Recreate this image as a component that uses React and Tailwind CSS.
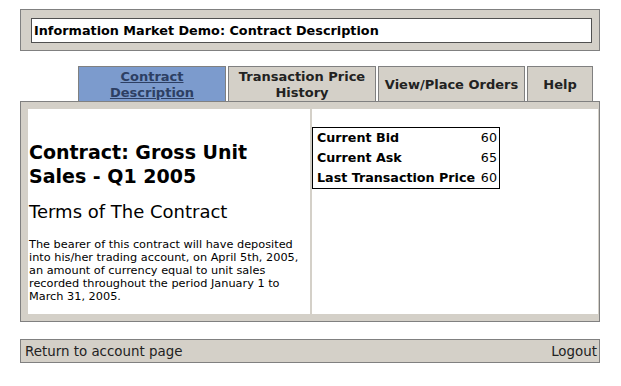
export default function App() {
  const tabs = [
    { label: 'Contract Description', active: true, w: 'w-[148px]' },
    { label: 'Transaction Price History', w: 'w-[148px]' },
    { label: 'View/Place Orders', w: 'w-[147px]', nowrap: true },
    { label: 'Help', w: 'w-[66px]' },
  ]

  const quotes = [
    ['Current Bid', '60'],
    ['Current Ask', '65'],
    ['Last Transaction Price', '60'],
  ]

  return (
    <div className="w-[621px] h-[386px] bg-white pt-[9px] font-['DejaVu_Sans',sans-serif] text-black">
      {/* title bar */}
      <div className="ml-[20px] w-[580px] h-[42px] border border-[#808080] bg-[#d4d0c8] pl-[10px] pr-[7px] pt-[8px]">
        <div className="h-[25px] bg-white border border-[#505050] px-[2px] flex items-center text-[12.8px] font-bold">
          Information Market Demo: Contract Description
        </div>
      </div>

      {/* tabs */}
      <div className="mt-[15px] ml-[78px] flex gap-[2px] h-[35px]">
        {tabs.map((t) => (
          <div
            key={t.label}
            className={`${t.w} border border-b-0 border-[#808080] flex items-center justify-center text-center text-[13px] leading-[16px] font-bold pt-[2px] ${
              t.active ? 'bg-[#7c9bcd] text-[#2d3f63] underline' : 'bg-[#d4d0c8] text-[#222]'
            }`}
          >
            <span className={t.nowrap ? 'whitespace-nowrap' : 'px-[6px]'}>{t.label}</span>
          </div>
        ))}
      </div>

      {/* main panel */}
      <div className="ml-[20px] w-[580px] h-[221px] border border-[#808080] bg-[#d4d0c8] pl-[7px] pr-[1px] py-[7px] flex gap-[2px]">
        <div className="w-[282px] bg-white pl-[1px] pt-[31px]">
          <h1 className="text-[19px] leading-[24px] font-bold">Contract: Gross Unit Sales - Q1 2005</h1>
          <h2 className="mt-[13px] text-[18px] leading-[22px]">Terms of The Contract</h2>
          <p className="mt-[15px] text-[11.3px] leading-[13px] pr-[4px]">
            The bearer of this contract will have deposited into his/her trading account, on April 5th, 2005, an amount of currency equal to unit sales recorded throughout the period January 1 to March 31, 2005.
          </p>
        </div>
        <div className="flex-1 bg-white pt-[18px]">
          <div className="w-[188px] border border-black text-[12.7px]">
            {quotes.map(([k, v]) => (
              <div key={k} className="h-[20px] flex items-center justify-between pl-[4px] pr-[2px]">
                <span className="font-bold">{k}</span>
                <span>{v}</span>
              </div>
            ))}
          </div>
        </div>
      </div>

      {/* footer */}
      <div className="mt-[17px] ml-[20px] w-[580px] h-[24px] border border-[#808080] bg-[#d4d0c8] flex items-center justify-between pl-[4px] pr-[2px] pt-[2px] text-[13.4px] text-[#222]">
        <span>Return to account page</span>
        <span>Logout</span>
      </div>
    </div>
  )
}
